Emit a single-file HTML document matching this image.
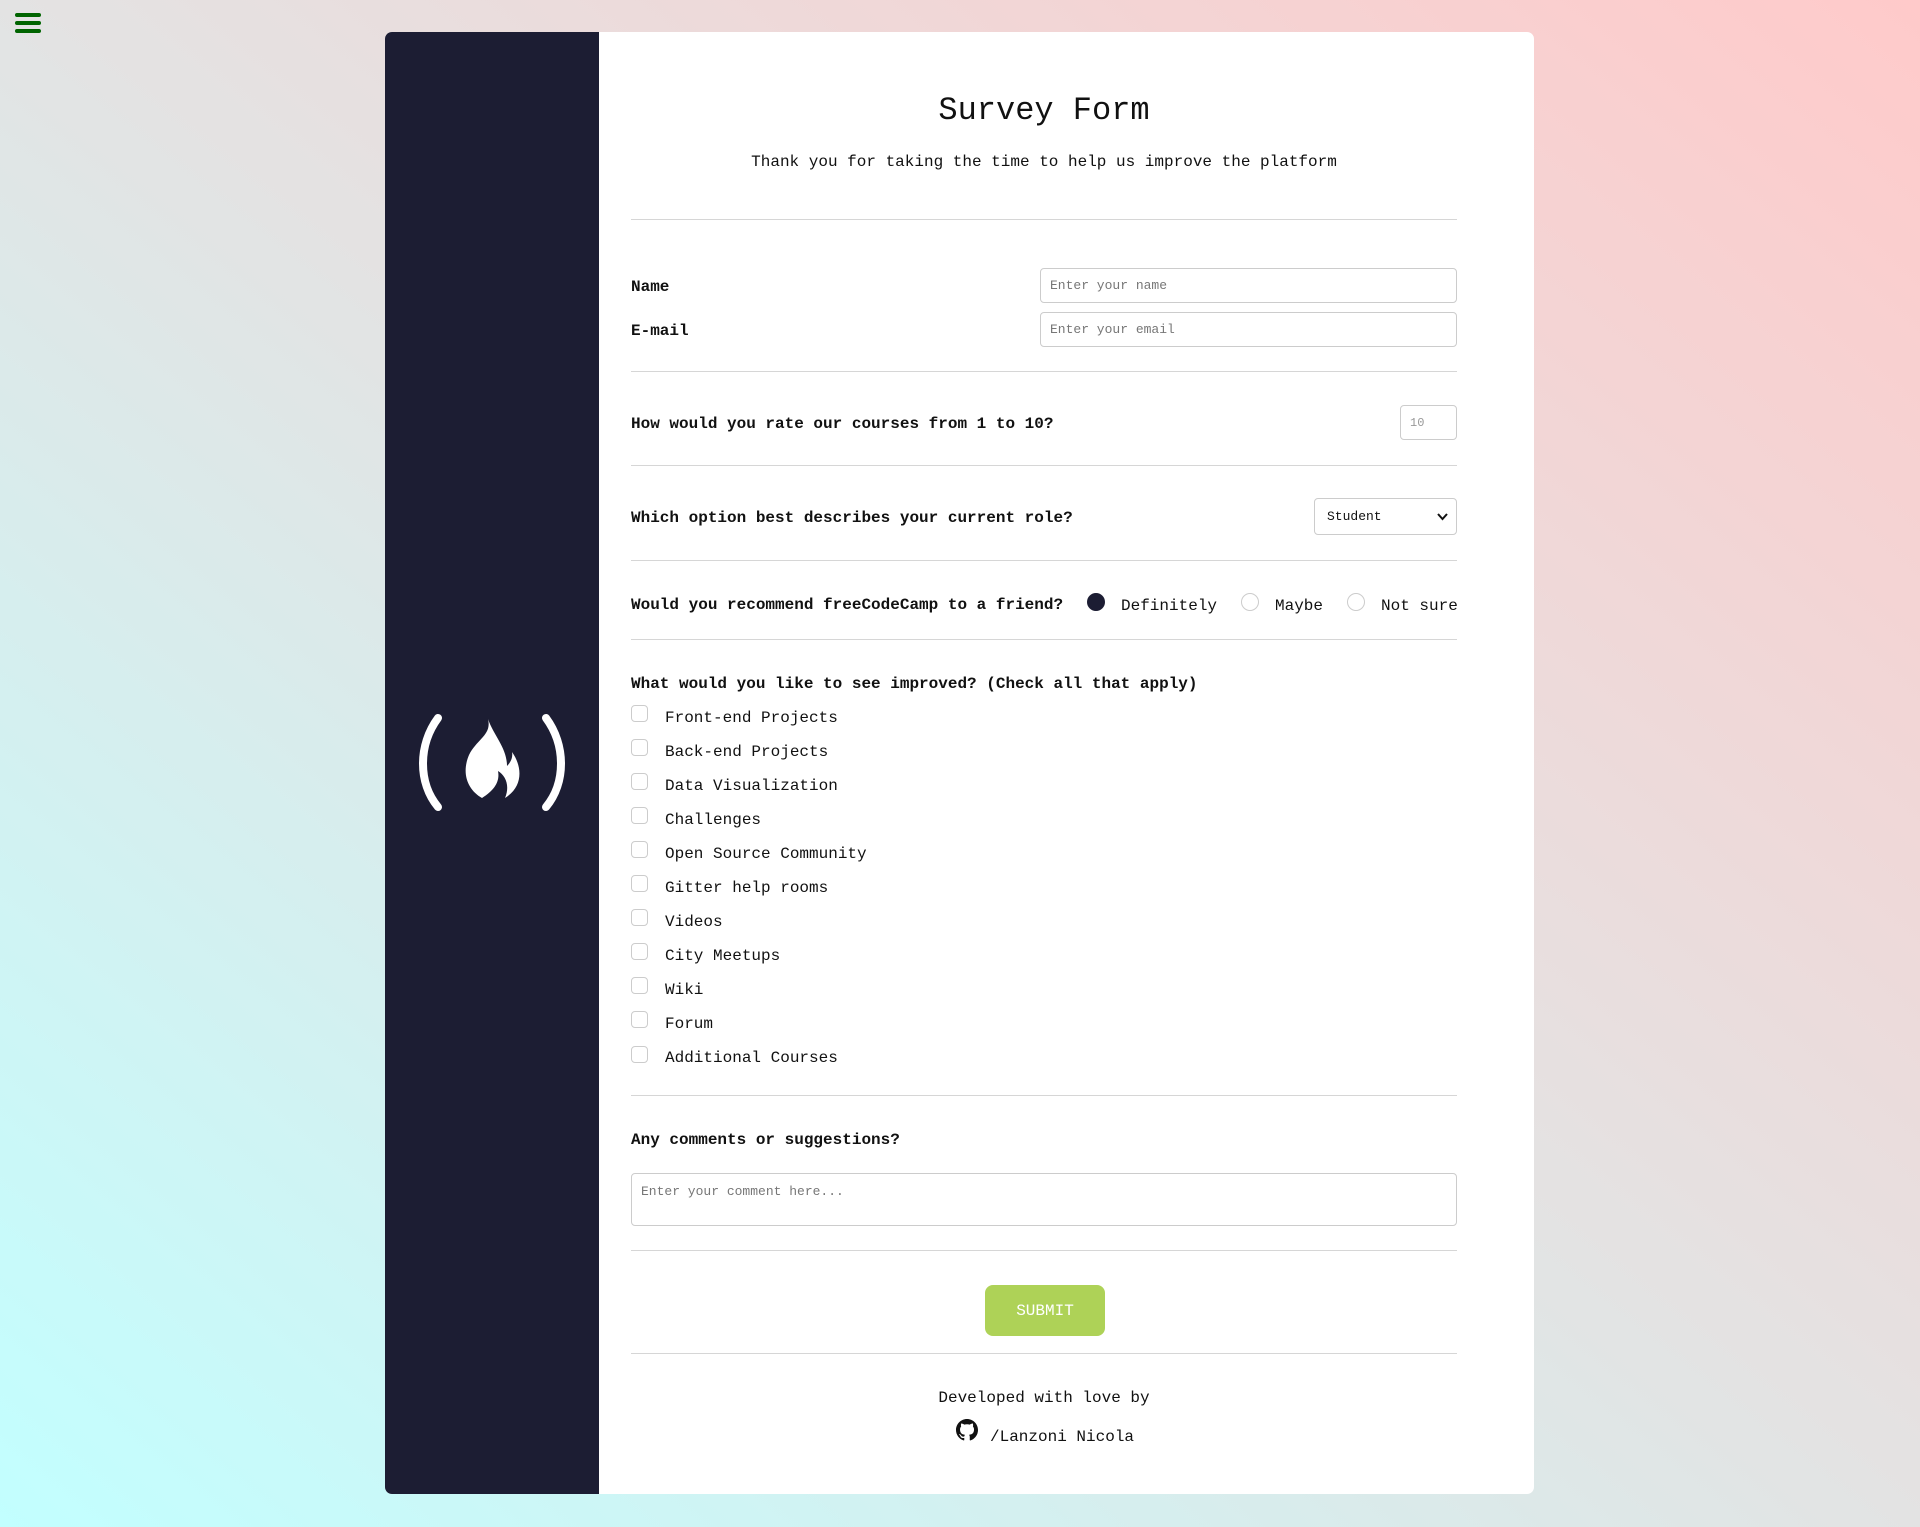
<!DOCTYPE html>
<html><head><meta charset="utf-8"><style>
*{box-sizing:border-box;margin:0;padding:0}
html,body{width:1920px;height:1527px;overflow:hidden}
body{background:linear-gradient(to top right,#c2ffff 0%,#e3e3e3 50%,#ffcaca 100%);font-family:"Liberation Mono",monospace;color:#111;position:relative}
.ham{position:absolute;left:15px;width:26px;height:4px;background:#006400;border-radius:2px}
.card{position:absolute;left:385px;top:32px;width:1149px;height:1462px;background:#fff;border-radius:7px;overflow:hidden}
.side{position:absolute;left:385px;top:32px;width:214px;height:1462px;background:#1c1d33;border-radius:7px 0 0 7px}
.t{position:absolute;height:20px;line-height:20px;font-size:16px;white-space:nowrap}
.c{left:631px;width:826px;text-align:center}
.b{font-weight:bold}
.hr{position:absolute;left:631px;width:826px;height:1px;background:#d6d6d6}
.in{position:absolute;border:1px solid #ccc;border-radius:4px;background:#fff;font-size:13px;color:#777;padding-left:9px;display:flex;align-items:center}
.cb{position:absolute;left:631px;width:17px;height:17px;border:1px solid #ccc;border-radius:4px;background:#fff}
.rd{position:absolute;width:18px;height:18px;border-radius:50%;border:1px solid #ccc;background:#fff}
</style></head><body>
<div class="ham" style="top:13px"></div><div class="ham" style="top:21px"></div><div class="ham" style="top:29px"></div>
<div class="card"></div>
<div class="side"></div>
<svg style="position:absolute;left:0;top:0" width="1920" height="1527">
<path d="M438,718 C418,745 418,783 438,807" stroke="#fff" stroke-width="8" fill="none" stroke-linecap="round"/>
<path d="M546,718 C566,745 566,783 546,807" stroke="#fff" stroke-width="8" fill="none" stroke-linecap="round"/>
<path d="M488,719 C494,736 507,748 507,766 C511,762 513,757 512,752 C522,766 524,786 505,798 C510,786 506,776 498,771 C500,781 495,790 482,798 C468,790 461,774 469,755 C477,739 492,735 488,719 Z" fill="#fff"/>
</svg>
<div class="t c" style="top:94px;height:34px;line-height:34px;font-size:32px">Survey Form</div>
<div class="t c" style="top:152px">Thank you for taking the time to help us improve the platform</div>
<div class="hr" style="top:219px"></div>
<div class="t b" style="left:631px;top:277px">Name</div>
<div class="in" style="left:1040px;top:268px;width:417px;height:35px">Enter your name</div>
<div class="t b" style="left:631px;top:321px">E-mail</div>
<div class="in" style="left:1040px;top:312px;width:417px;height:35px">Enter your email</div>
<div class="hr" style="top:371px"></div>
<div class="t b" style="left:631px;top:414px">How would you rate our courses from 1 to 10?</div>
<div class="in" style="left:1400px;top:405px;width:57px;height:35px;font-size:12px;color:#999">10</div>
<div class="hr" style="top:465px"></div>
<div class="t b" style="left:631px;top:508px">Which option best describes your current role?</div>
<div class="in" style="left:1314px;top:498px;width:143px;height:37px;color:#111;padding-left:12px">Student<svg style="position:absolute;right:8px;top:14px" width="11" height="8"><path d="M1,1 L5.5,6 L10,1" stroke="#111" stroke-width="2" fill="none"/></svg></div>
<div class="hr" style="top:560px"></div>
<div class="t b" style="left:631px;top:595px">Would you recommend freeCodeCamp to a friend?</div>
<div class="rd" style="left:1087px;top:593px;background:#1c1d33;border-color:#1c1d33"></div>
<div class="t" style="left:1121px;top:596px">Definitely</div>
<div class="rd" style="left:1241px;top:593px"></div>
<div class="t" style="left:1275px;top:596px">Maybe</div>
<div class="rd" style="left:1347px;top:593px"></div>
<div class="t" style="left:1381px;top:596px">Not sure</div>
<div class="hr" style="top:639px"></div>
<div class="t b" style="left:631px;top:674px">What would you like to see improved? (Check all that apply)</div>
<div class="cb" style="top:705px"></div><div class="t" style="left:665px;top:708px">Front-end Projects</div>
<div class="cb" style="top:739px"></div><div class="t" style="left:665px;top:742px">Back-end Projects</div>
<div class="cb" style="top:773px"></div><div class="t" style="left:665px;top:776px">Data Visualization</div>
<div class="cb" style="top:807px"></div><div class="t" style="left:665px;top:810px">Challenges</div>
<div class="cb" style="top:841px"></div><div class="t" style="left:665px;top:844px">Open Source Community</div>
<div class="cb" style="top:875px"></div><div class="t" style="left:665px;top:878px">Gitter help rooms</div>
<div class="cb" style="top:909px"></div><div class="t" style="left:665px;top:912px">Videos</div>
<div class="cb" style="top:943px"></div><div class="t" style="left:665px;top:946px">City Meetups</div>
<div class="cb" style="top:977px"></div><div class="t" style="left:665px;top:980px">Wiki</div>
<div class="cb" style="top:1011px"></div><div class="t" style="left:665px;top:1014px">Forum</div>
<div class="cb" style="top:1046px"></div><div class="t" style="left:665px;top:1048px">Additional Courses</div>
<div class="hr" style="top:1095px"></div>
<div class="t b" style="left:631px;top:1130px">Any comments or suggestions?</div>
<div class="in" style="left:631px;top:1173px;width:826px;height:53px;align-items:flex-start;padding-top:10px">Enter your comment here...</div>
<div class="hr" style="top:1250px"></div>
<div style="position:absolute;left:985px;top:1285px;width:120px;height:51px;background:#aed257;border-radius:8px;color:#fff;font-size:16px;display:flex;align-items:center;justify-content:center">SUBMIT</div>
<div class="hr" style="top:1353px"></div>
<div class="t c" style="top:1388px">Developed with love by</div>
<svg style="position:absolute;left:956px;top:1419px" width="22" height="22" viewBox="0 0 16 16"><path fill="#111" d="M8 0C3.58 0 0 3.58 0 8c0 3.54 2.29 6.530 5.47 7.59.4.07.55-.17.55-.38 0-.19-.01-.82-.01-1.49-2.01.37-2.53-.49-2.69-.94-.09-.23-.48-.94-.82-1.130-.28-.15-.68-.52-.01-.53.63-.01 1.080.58 1.230.82.72 1.21 1.870.87 2.330.66.07-.52.28-.87.51-1.07-1.78-.2-3.64-.89-3.64-3.95 0-.87.31-1.59.82-2.15-.08-.2-.36-1.02.08-2.12 0 0 .67-.21 2.2.82.64-.18 1.32-.27 2-.27.68 0 1.36.09 2 .27 1.53-1.04 2.2-.82 2.2-.82.44 1.1.16 1.92.08 2.12.51.56.82 1.27.82 2.15 0 3.07-1.87 3.75-3.65 3.95.29.25.54.73.54 1.48 0 1.07-.01 1.93-.01 2.2 0 .21.15.46.55.38A8.013 8.013 0 0016 8c0-4.42-3.58-8-8-8z"/></svg>
<div class="t" style="left:990px;top:1427px">/Lanzoni Nicola</div>
</body></html>
